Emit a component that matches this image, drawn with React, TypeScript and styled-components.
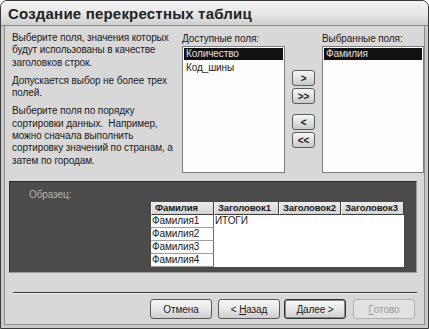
import styled, { createGlobalStyle } from "styled-components";

const GlobalStyle = createGlobalStyle`
  html, body {
    margin: 0;
    padding: 0;
    background: #ffffff;
  }
  body {
    font-family: "Liberation Sans", Arial, sans-serif;
    font-size: 10px;
    letter-spacing: -0.1px;
    color: #1a1a1a;
  }
`;

const Window = styled.div`
  width: 429px;
  height: 329px;
  box-sizing: border-box;
  border: 1px solid #3a3a3a;
  border-radius: 7px 7px 0 0;
  background: #c9c9c9;
  display: flex;
  flex-direction: column;
  padding: 0 3px 3px 3px;
  overflow: hidden;
`;

const TitleBar = styled.div`
  height: 24px;
  display: flex;
  align-items: center;
  background: linear-gradient(#f4f4f4, #e6e6e6 55%, #cfcfcf);
  margin: 0 -3px;
  padding-left: 7px;
  border-bottom: 1px solid #8a8a8a;
  font-size: 15px;
  letter-spacing: 0.2px;
  font-weight: bold;
  color: #222;
`;

const Body = styled.div`
  flex: 1;
  background: #d8d8d8;
  border: 1px solid #8c8c8c;
  border-top: none;
  display: flex;
  flex-direction: column;
  padding: 5px 7px 0 4px;
`;

const Top = styled.div`
  height: 142px;
  display: grid;
  grid-template-columns: 163px 103px 23px 102px;
  column-gap: 7px;
  align-items: start;
  margin-left: 3px;
`;

const Intro = styled.div`
  display: flex;
  flex-direction: column;
  gap: 6px;
  line-height: 12.3px;
  padding-top: 1px;
  white-space: nowrap;
`;

const ListColumn = styled.div`
  display: flex;
  flex-direction: column;
`;

const Label = styled.div`
  height: 14px;
  line-height: 14px;
  margin-top: 1px;
`;

const ListBox = styled.div`
  height: 127px;
  background: #fdfdfd;
  border: 1px solid #7d7d7d;
  padding: 1px;
  box-sizing: border-box;
`;

const Item = styled.div<{ $selected?: boolean }>`
  height: 12px;
  line-height: 12px;
  padding-left: 2px;
  margin-bottom: 2px;
  background: ${(p) => (p.$selected ? "#111" : "transparent")};
  color: ${(p) => (p.$selected ? "#e0e0e0" : "#1a1a1a")};
`;

const ArrowColumn = styled.div`
  display: flex;
  flex-direction: column;
  padding-top: 39px;
  gap: 2px;
`;

const ArrowButton = styled.div<{ $gapBefore?: boolean }>`
  height: 16px;
  box-sizing: border-box;
  border: 1px solid #5c5c5c;
  border-radius: 3px;
  background: linear-gradient(#f6f6f6, #e2e2e2 50%, #c8c8c8);
  display: flex;
  align-items: center;
  justify-content: center;
  font-weight: bold;
  font-size: 10px;
  margin-top: ${(p) => (p.$gapBefore ? "8px" : "0")};
`;

const Sample = styled.div`
  margin-top: 8px;
  height: 92px;
  box-sizing: border-box;
  background: #4b4b4b;
  border: 1px solid #2b2b2b;
  border-right-color: #9a9a9a;
  border-bottom-color: #9a9a9a;
  display: flex;
  flex-direction: column;
  padding: 7px 0 0 19px;
`;

const SampleLabel = styled.div`
  color: #b4b4b4;
  line-height: 12px;
`;

const Table = styled.div`
  margin: 1px 0 0 122px;
  width: 253px;
  display: grid;
  grid-template-columns: 63px 65px 62px 63px;
  grid-template-rows: 13px repeat(4, 13px);
  background: #fff;
`;

const HeadCell = styled.div`
  background: linear-gradient(#ececec, #d4d4d4);
  border-right: 1px solid #3c3c3c;
  border-bottom: 1px solid #3c3c3c;
  border-left: 1px solid #f8f8f8;
  font-weight: bold;
  font-size: 9.5px;
  line-height: 12px;
  padding-left: 3px;
  box-sizing: border-box;
  white-space: nowrap;
  overflow: hidden;
`;

const RowCell = styled.div`
  border-bottom: 1px solid #9d9d9d;
  border-right: 1px solid #6a6a6a;
  line-height: 12px;
  padding-left: 1px;
  box-sizing: border-box;
  background: #fff;
`;

const Totals = styled.div`
  grid-column: 2 / 5;
  grid-row: 2 / 6;
  padding-left: 1px;
  line-height: 12px;
  background: #fff;
`;

const Separator = styled.div`
  margin: 19px 0 0 4px;
  height: 1px;
  background: #3a3a3a;
  border-bottom: 1px solid #f2f2f2;
`;

const Footer = styled.div`
  display: flex;
  justify-content: flex-end;
  margin-top: 5px;
  padding-right: 2px;
`;

const Button = styled.div<{ $default?: boolean; $disabled?: boolean; $gap?: number }>`
  width: 62px;
  height: 20px;
  box-sizing: border-box;
  margin-left: ${(p) => p.$gap ?? 0}px;
  border: 1px solid ${(p) => (p.$default ? "#2e2e2e" : p.$disabled ? "#b0b0b0" : "#585858")};
  box-shadow: ${(p) => (p.$default ? "inset 0 0 0 1px #8a8a8a" : "none")};
  border-radius: 3px;
  background: ${(p) =>
    p.$disabled ? "#e2e2e2" : "linear-gradient(#f7f7f7, #e8e8e8 50%, #cdcdcd)"};
  color: ${(p) => (p.$disabled ? "#9a9a9a" : "#1a1a1a")};
  display: flex;
  align-items: center;
  justify-content: center;
`;

const rows = ["Фамилия1", "Фамилия2", "Фамилия3", "Фамилия4"];

export default function App() {
  return (
    <>
      <GlobalStyle />
      <Window>
        <TitleBar>Создание перекрестных таблиц</TitleBar>
        <Body>
          <Top>
            <Intro>
              <div>
                Выберите поля, значения которых
                <br />
                будут использованы в качестве
                <br />
                заголовков строк.
              </div>
              <div>
                Допускается выбор не более трех
                <br />
                полей.
              </div>
              <div>
                Выберите поля по порядку
                <br />
                сортировки данных.&nbsp; Например,
                <br />
                можно сначала выполнить
                <br />
                сортировку значений по странам, а
                <br />
                затем по городам.
              </div>
            </Intro>
            <ListColumn>
              <Label>Доступные поля:</Label>
              <ListBox>
                <Item $selected>Количество</Item>
                <Item>Код_шины</Item>
              </ListBox>
            </ListColumn>
            <ArrowColumn>
              <ArrowButton>&gt;</ArrowButton>
              <ArrowButton>&gt;&gt;</ArrowButton>
              <ArrowButton $gapBefore>&lt;</ArrowButton>
              <ArrowButton>&lt;&lt;</ArrowButton>
            </ArrowColumn>
            <ListColumn>
              <Label>Выбранные поля:</Label>
              <ListBox>
                <Item $selected>Фамилия</Item>
              </ListBox>
            </ListColumn>
          </Top>
          <Sample>
            <SampleLabel>Образец:</SampleLabel>
            <Table>
              <HeadCell>Фамилия</HeadCell>
              <HeadCell>Заголовок1</HeadCell>
              <HeadCell>Заголовок2</HeadCell>
              <HeadCell>Заголовок3</HeadCell>
              {rows.map((r, i) => (
                <RowCell key={r} style={{ gridRow: i + 2, gridColumn: 1 }}>
                  {r}
                </RowCell>
              ))}
              <Totals>ИТОГИ</Totals>
            </Table>
          </Sample>
          <Separator />
          <Footer>
            <Button>Отмена</Button>
            <Button $gap={6}>
              &lt;&nbsp;<u>Н</u>азад
            </Button>
            <Button $gap={4} $default>
              <u>Д</u>алее &gt;
            </Button>
            <Button $gap={7} $disabled>
              <u>Г</u>отово
            </Button>
          </Footer>
        </Body>
      </Window>
    </>
  );
}
